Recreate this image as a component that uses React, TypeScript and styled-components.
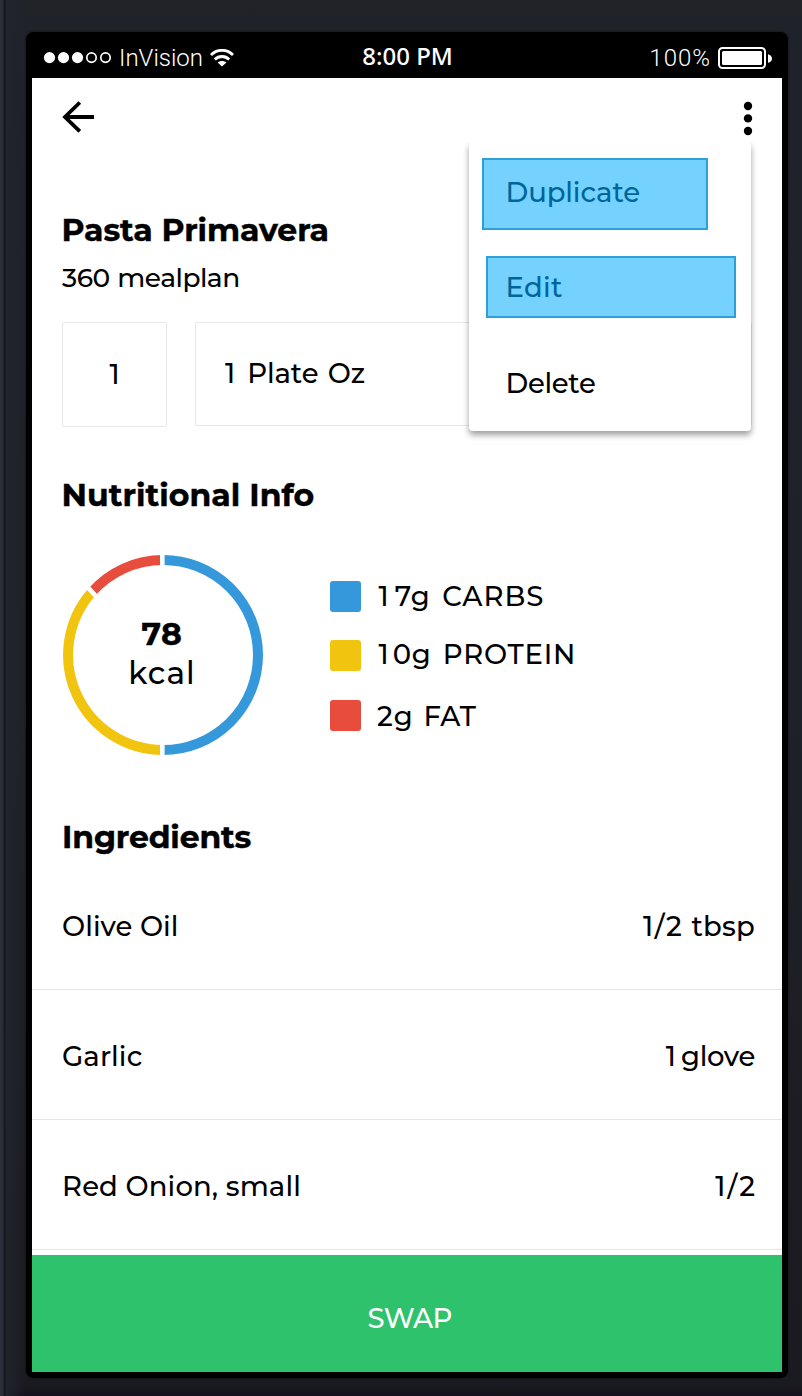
import React from "react";
import styled, { createGlobalStyle } from "styled-components";

const GlobalStyle = createGlobalStyle`
  * { box-sizing: border-box; }
  body { margin: 0; background: #1d2026; }
  h1, h2, p, ul { margin: 0; padding: 0; font-weight: inherit; }
  button { font: inherit; border: 0; padding: 0; background: none; text-align: left; }
`;

const Device = styled.div`
  width: 802px;
  height: 1396px;
  padding: 32px 14px 18px 26px;
  overflow: hidden;
  font-family: Montserrat, Inter, sans-serif;
  font-weight: 500;
  color: #000;
  background:
    linear-gradient(90deg, #2d303a 0, #2a2d36 3px, #15171c 4px, #15171c 5px, rgba(32, 36, 44, 0.9) 6px, rgba(32, 36, 44, 0) 26px),
    linear-gradient(180deg, #212328 0, #1f222a 30px, #1e2128 700px, #1a1b20 1385px, #14121a 1396px);
`;

const Bezel = styled.div`
  height: 1346px;
  padding: 0 6px 6px;
  background: #000;
  border-radius: 8px;
  box-shadow: 0 0 2px #08090b;
`;

const StatusBar = styled.div`
  height: 46px;
  padding: 5px 10px 0 11px;
  display: grid;
  grid-template-columns: 1fr auto 1fr;
  align-items: center;
  color: #fff;
`;

const StatusGroup = styled.div<{ $end?: boolean }>`
  display: flex;
  align-items: center;
  justify-content: ${(p) => (p.$end ? "flex-end" : "flex-start")};
  gap: 7px;
`;

const Light = styled.span<{ $tracking?: number }>`
  font: 300 24px/30px Roboto, "Liberation Sans", sans-serif;
  letter-spacing: ${(p) => p.$tracking ?? 0}px;
`;

const Clock = styled.span`
  font: 500 24px/30px "Noto Sans", sans-serif;
  padding-bottom: 3px;
`;

const Screen = styled.main`
  position: relative;
  height: 1294px;
  display: flex;
  flex-direction: column;
  background: #fff;
`;

const Header = styled.header`
  height: 132px;
  padding: 22px 29px 0;
  display: flex;
  justify-content: space-between;
`;

const Section = styled.section<{ $top?: number }>`
  padding: ${(p) => p.$top ?? 0}px 30px 0;
`;

type TextProps = { $size?: number; $tracking?: number; $words?: number; $lead?: number; $line?: number };

const Text = styled.span<TextProps>`
  display: block;
  font-size: ${(p) => p.$size ?? 27.5}px;
  line-height: ${(p) => p.$line ?? 32}px;
  letter-spacing: ${(p) => p.$tracking ?? 0}px;
  word-spacing: ${(p) => p.$words ?? 0}px;
  white-space: nowrap;
  &::first-letter { letter-spacing: ${(p) => p.$lead ?? p.$tracking ?? 0}px; }
`;

const Heading = styled(Text)<{ $inset?: number }>`
  font-size: 31.5px;
  font-weight: 700;
  line-height: 40px;
  margin-left: ${(p) => p.$inset ?? -0.5}px;
  -webkit-text-stroke: 0.4px currentColor;
`;

const Fields = styled.div`
  display: flex;
  gap: 28px;
  padding-top: 16px;
  height: 133px;
  align-items: flex-start;
`;

const Field = styled.div<{ $wide?: boolean }>`
  width: ${(p) => (p.$wide ? 557 : 105)}px;
  flex: none;
  height: ${(p) => (p.$wide ? 104 : 105)}px;
  padding: 0 0 2px ${(p) => (p.$wide ? 29 : 0)}px;
  display: flex;
  align-items: center;
  justify-content: ${(p) => (p.$wide ? "flex-start" : "center")};
  border: 1px solid #e8e8e8;
  border-radius: 2px;
`;

const Nutrition = styled.div`
  display: flex;
  gap: 67px;
  padding: 40px 0 0 1px;
`;

const RingBox = styled.div`
  display: grid;
  width: 200px;
  height: 200px;
  > * { grid-area: 1 / 1; }
`;

const RingLabel = styled.div`
  display: flex;
  flex-direction: column;
  align-items: center;
  padding: 60px 2px 0 0;
`;

const RingValue = styled(Heading)`
  margin: 0;
  line-height: 39px;
`;

const Legend = styled.ul`
  padding-top: 26px;
  display: flex;
  flex-direction: column;
  gap: 28px;
  list-style: none;
`;

const LegendItem = styled.li<{ $color: string; $lift: number; $gap: number }>`
  display: flex;
  align-items: center;
  gap: ${(p) => p.$gap}px;
  height: 31px;
  &:last-child { margin-top: 1px; }
  &::before {
    content: "";
    width: 31px;
    height: 31px;
    border-radius: 3px;
    background: ${(p) => p.$color};
  }
  > span { margin-bottom: ${(p) => p.$lift}px; }
`;

const Ingredients = styled.ul`
  padding-top: 3px;
  list-style: none;
`;

const Row = styled.li`
  height: 130px;
  padding: 3px 27px 0 30px;
  display: flex;
  align-items: center;
  justify-content: space-between;
  border-bottom: 1px solid #e6e6e6;
`;

const SwapButton = styled.button`
  width: 100%;
  height: 117px;
  margin-top: auto;
  padding: 8px 0 0 5px;
  display: flex;
  justify-content: center;
  align-items: center;
  color: #fff;
  background: #2ec26c;
`;

const Menu = styled.div`
  position: absolute;
  top: 64px;
  left: 437px;
  width: 282px;
  height: 289px;
  padding-top: 16px;
  background: #fff;
  border-radius: 4px;
  box-shadow: 0 4px 6px rgba(0, 0, 0, 0.38);
  clip-path: inset(0 -12px -16px -12px);
`;

const MenuItem = styled.button<{ $width: number; $height: number; $left: number; $gap?: number; $lit?: boolean; $pad: number }>`
  display: flex;
  align-items: flex-start;
  width: ${(p) => p.$width}px;
  height: ${(p) => p.$height}px;
  margin: 0 0 ${(p) => p.$gap ?? 0}px ${(p) => p.$left}px;
  padding: ${(p) => p.$pad}px 0 0 ${(p) => 34.5 - p.$left}px;
  border: 2px solid ${(p) => (p.$lit ? "#2d9fd9" : "transparent")};
  background: ${(p) => (p.$lit ? "#75d2ff" : "transparent")};
  color: ${(p) => (p.$lit ? "#00659a" : "#000")};
`;

const Signal = () => (
  <svg width="69" height="14" viewBox="0 0 69 14">
    {[6.5, 20.5, 34.5].map((x) => <circle key={x} cx={x} cy="6.6" r="5.6" fill="#fff" />)}
    {[48.5, 62.5].map((x) => <circle key={x} cx={x} cy="6.6" r="4.7" fill="none" stroke="#fff" strokeWidth="1.7" />)}
  </svg>
);

const Wifi = () => (
  <svg width="24" height="18" viewBox="0 0 24 18">
    <g fill="none" stroke="#fff" strokeWidth="2.8">
      <path d="M1 6C7.2 -.3 16.8 -.3 23 6" />
      <path d="M4.8 10.5C8.7 6.5 15.3 6.5 19.2 10.5" />
    </g>
    <path d="M12 17.6 7.6 13.4C10.2 11.4 13.8 11.4 16.4 13.4Z" fill="#fff" />
  </svg>
);

const Battery = () => (
  <svg width="54" height="22" viewBox="0 0 54 22">
    <rect x="1" y="1" width="46" height="20" rx="3.5" fill="none" stroke="#fff" strokeWidth="2" />
    <rect x="4" y="4" width="40" height="14" rx="1.5" fill="#fff" />
    <path d="M50 7.2C55.3 8.3 55.3 14.7 50 15.8Z" fill="#fff" />
  </svg>
);

const BackArrow = () => (
  <svg width="34" height="34" viewBox="0 0 34 34" fill="none" stroke="#000" strokeWidth="3.8">
    <path d="M33 17H4M18.8 2.5 4 17 18.8 31.4" />
  </svg>
);

const More = () => (
  <svg width="10" height="36" viewBox="0 0 10 36">
    {[6, 18.4, 31].map((y) => <circle key={y} cx="5" cy={y} r="4.2" />)}
  </svg>
);

const Ring = () => (
  <svg width="200" height="200" viewBox="0 0 200 200" fill="none" strokeWidth="10">
    <path d="M100 5A95 95 0 0 1 100 195" stroke="#3498db" />
    <path d="M100 195A95 95 0 0 1 28.7 37.3" stroke="#f1c40f" />
    <path d="M28.7 37.3A95 95 0 0 1 100 5" stroke="#e84c3d" />
    <path d="M99.3 0V12M99.3 188V200M21.5 28.6 36 44.6" stroke="#fff" strokeWidth="4.6" />
  </svg>
);

const legend = [
  { label: "17g CARBS", color: "#3498db", tracking: 1, lead: 6, words: 3, lift: 2, gap: 17.5 },
  { label: "10g PROTEIN", color: "#f1c40f", tracking: 0.8, lead: 4, words: 3, lift: 3, gap: 17.5 },
  { label: "2g FAT", color: "#e84c3d", tracking: 0.2, lead: 1, words: 3, lift: 0, gap: 16 },
];

const ingredients = [
  { name: "Olive Oil", nameTracking: 0.05, amount: "1/2 tbsp", tracking: 0.2, lead: 1.5, words: 2 },
  { name: "Garlic", nameTracking: 0.1, amount: "1 glove", tracking: -0.3, lead: 0, words: -2 },
  { name: "Red Onion, small", nameTracking: 0.13, amount: "1/2", tracking: 0, lead: 2, words: 0 },
];

export default function App() {
  return (
    <Device>
      <GlobalStyle />
      <Bezel>
        <StatusBar>
          <StatusGroup>
            <Signal />
            <Light>InVision</Light>
            <Wifi />
          </StatusGroup>
          <Clock>8:00 PM</Clock>
          <StatusGroup $end>
            <Light $tracking={1}>100%</Light>
            <Battery />
          </StatusGroup>
        </StatusBar>
        <Screen>
          <Header>
            <BackArrow />
            <More />
          </Header>
          <Section>
            <Heading as="h1" $tracking={-0.05}>Pasta Primavera</Heading>
            <Text as="p" $size={26.5} $line={56} $tracking={-0.5} $words={1}>360 mealplan</Text>
            <Fields>
              <Field><Text>1</Text></Field>
              <Field $wide><Text $tracking={-0.1} $lead={2.5} $words={2.2}>1 Plate Oz</Text></Field>
            </Fields>
          </Section>
          <Section $top={36}>
            <Heading as="h2" $tracking={0.05}>Nutritional Info</Heading>
            <Nutrition>
              <RingBox>
                <Ring />
                <RingLabel>
                  <RingValue $tracking={0.7}>78</RingValue>
                  <Text $size={31} $line={38} $tracking={1}>kcal</Text>
                </RingLabel>
              </RingBox>
              <Legend>
                {legend.map((l) => (
                  <LegendItem key={l.label} $color={l.color} $lift={l.lift} $gap={l.gap}>
                    <Text $tracking={l.tracking} $lead={l.lead} $words={l.words}>{l.label}</Text>
                  </LegendItem>
                ))}
              </Legend>
            </Nutrition>
          </Section>
          <Section $top={62}>
            <Heading as="h2" $inset={0} $tracking={-0.15}>Ingredients</Heading>
          </Section>
          <Ingredients>
            {ingredients.map((i) => (
              <Row key={i.name}>
                <Text $tracking={i.nameTracking}>{i.name}</Text>
                <Text $tracking={i.tracking} $lead={i.lead} $words={i.words}>{i.amount}</Text>
              </Row>
            ))}
          </Ingredients>
          <SwapButton><Text $tracking={-0.7}>SWAP</Text></SwapButton>
          <Menu>
            <MenuItem $lit $left={13} $width={226} $height={72} $gap={26} $pad={16}>
              <Text $tracking={-0.1}>Duplicate</Text>
            </MenuItem>
            <MenuItem $lit $left={17} $width={250} $height={62} $gap={28} $pad={13}>
              <Text $tracking={0.3}>Edit</Text>
            </MenuItem>
            <MenuItem $left={17} $width={250} $height={62} $pad={19}>
              <Text $tracking={-0.3}>Delete</Text>
            </MenuItem>
          </Menu>
        </Screen>
      </Bezel>
    </Device>
  );
}
